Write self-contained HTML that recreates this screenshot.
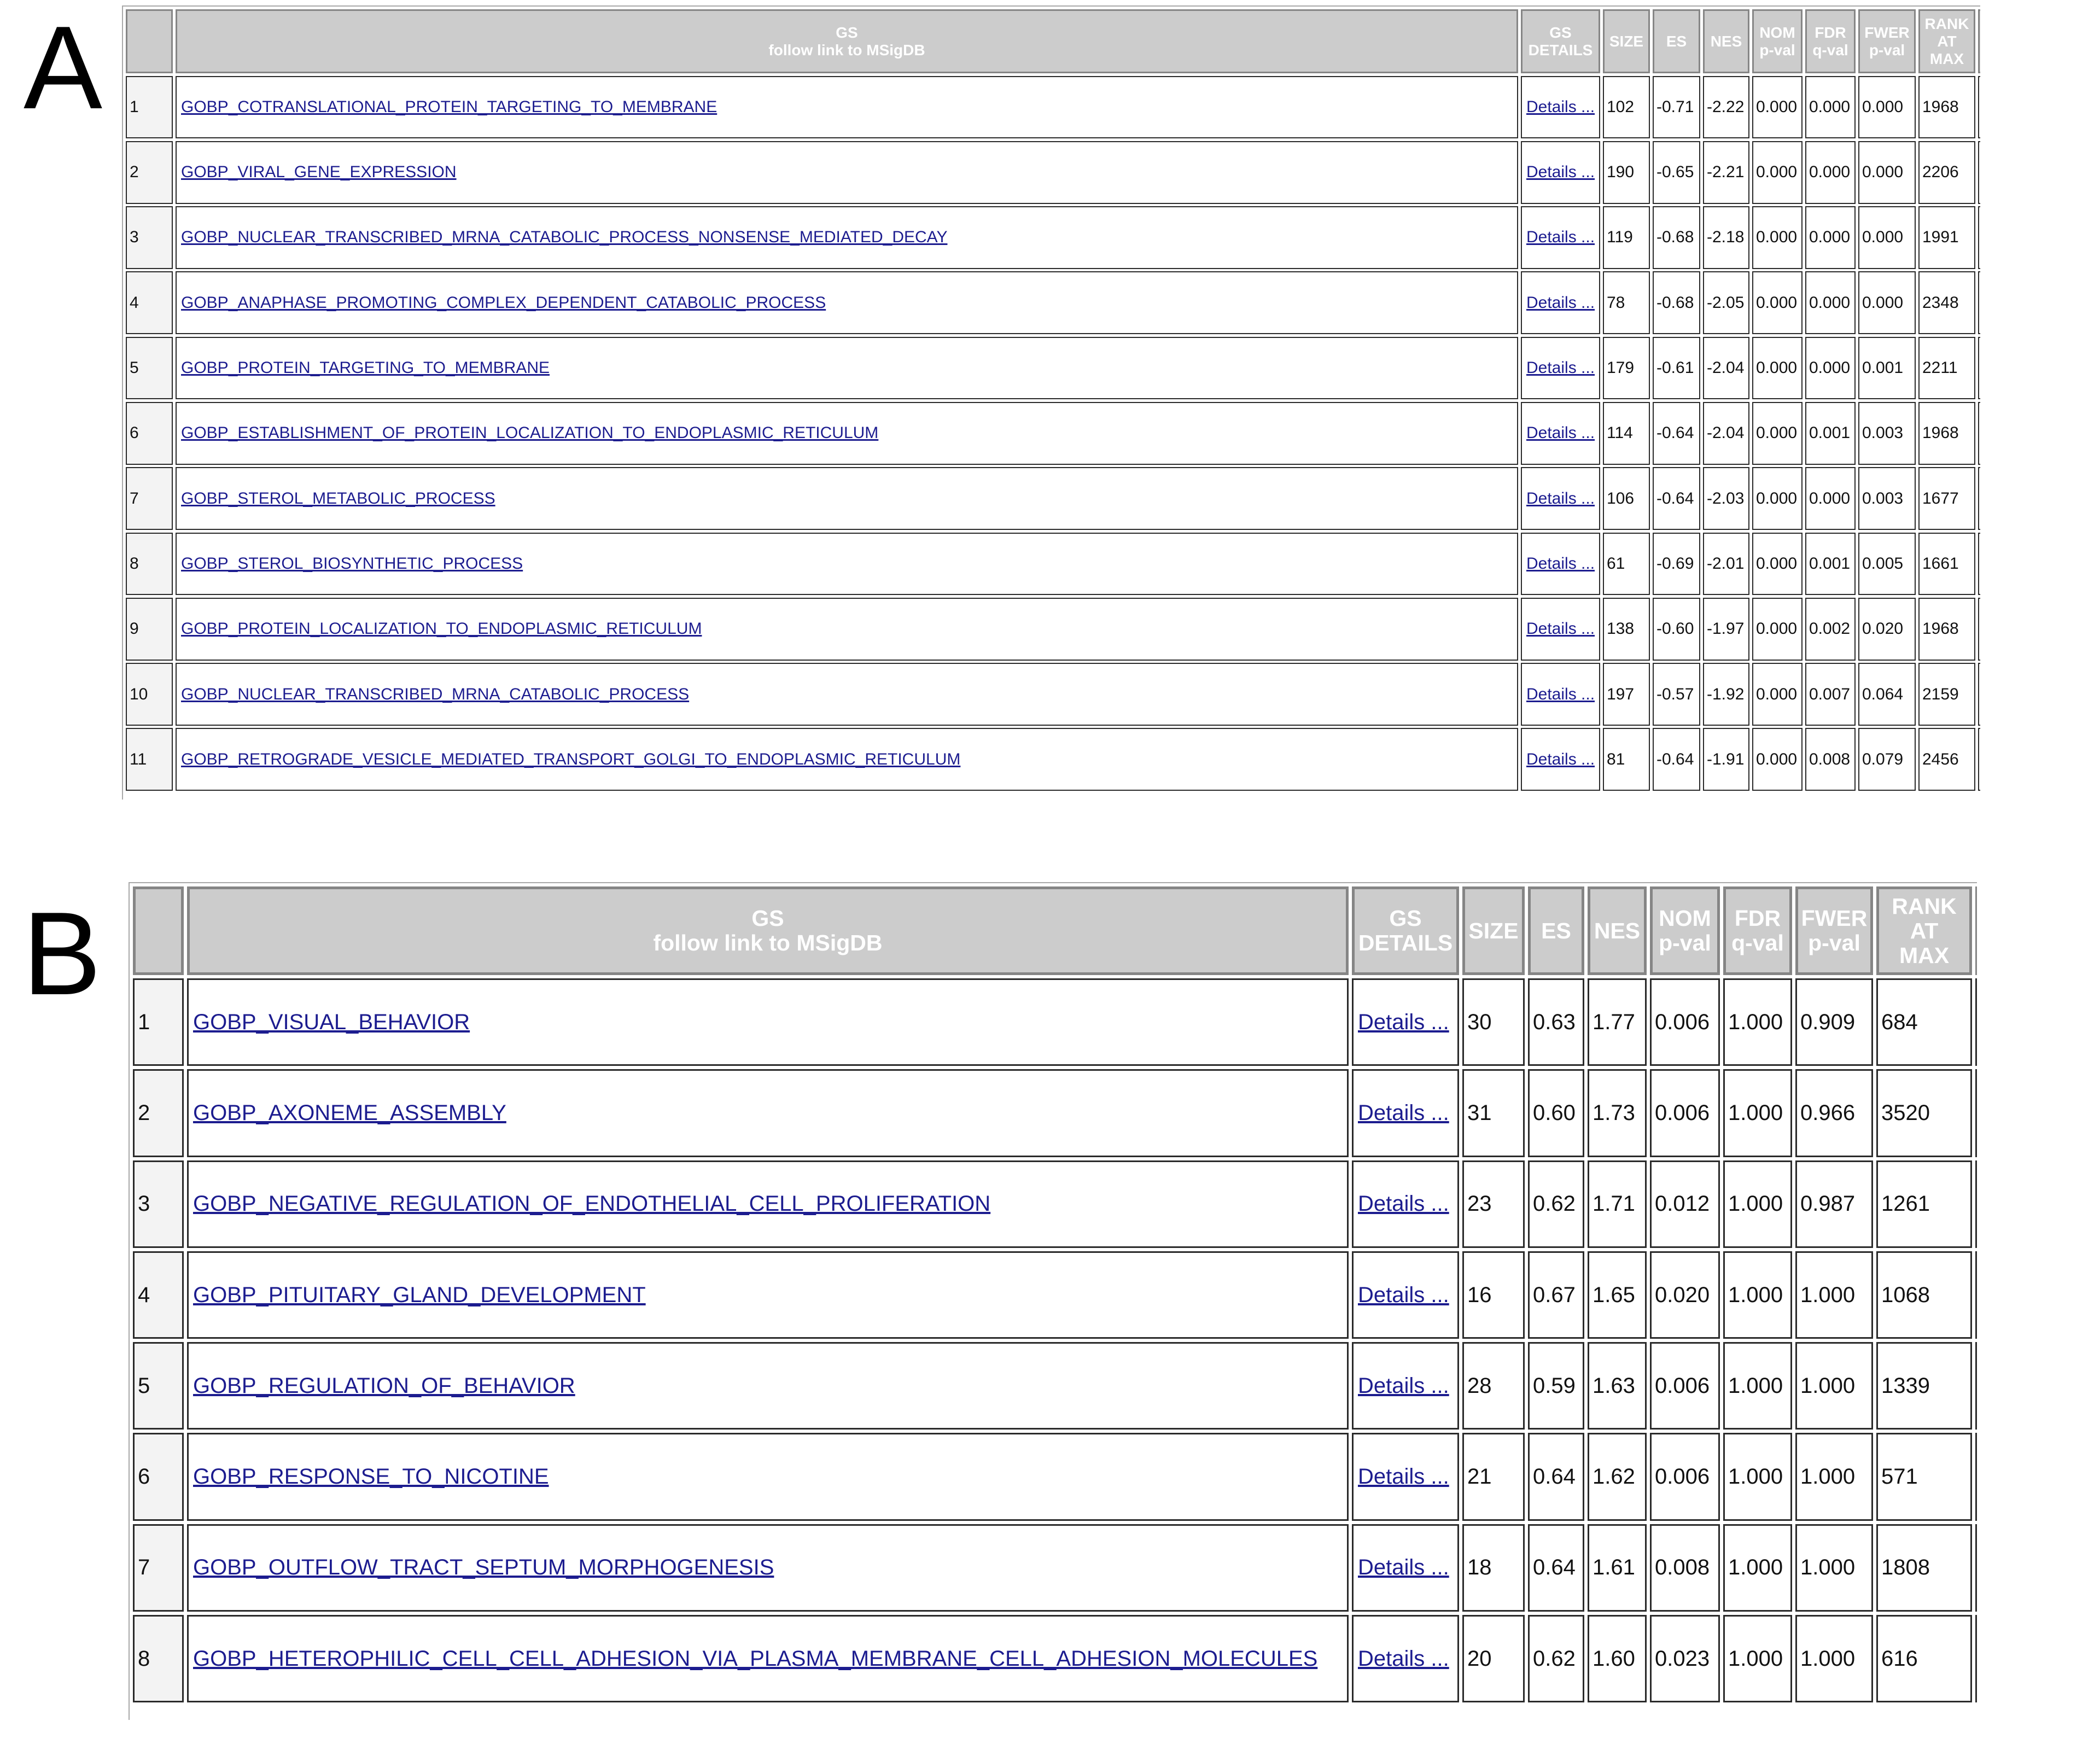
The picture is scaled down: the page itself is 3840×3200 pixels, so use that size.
<!DOCTYPE html>
<html><head><meta charset="utf-8">
<style>
html,body{margin:0;padding:0;background:#fff;width:3840px;height:3200px;overflow:hidden;font-family:"Liberation Sans",Arial,sans-serif;}
.lbl{position:absolute;font-size:216px;line-height:216px;color:#000;}
.g{position:absolute;overflow:hidden;display:grid;box-sizing:border-box;border-top:2px solid #a8a8a8;border-left:2px solid #a8a8a8;align-content:start;}
.g>div{box-sizing:border-box;display:flex;align-items:center;white-space:nowrap;overflow:hidden;}
.h{background:#ccc;color:#fff;font-weight:bold;justify-content:center;text-align:center;}
.c{background:#fff;color:#111;}
.n{background:#f3f3f3;color:#111;}
a{color:#1c1c8f;text-decoration:underline;}
#ta{left:223px;top:10px;width:3398px;height:1452px;padding:5px;column-gap:5px;row-gap:4.5px;
grid-template-columns:86px 2455px 145px 86px 87px 85px 92px 92px 105px 104px 100px;
grid-template-rows:117px repeat(11,114.8px);}
#ta .h{border:3px solid #868686;font-size:28px;line-height:32px;}
#ta .c,#ta .n{border:2px solid #2a2a2a;font-size:30px;padding-left:5px;}
#ta .l{padding-left:8px;}
#tb{left:235px;top:1613px;width:3380px;height:1532px;padding:6px;column-gap:6px;row-gap:6px;
grid-template-columns:93px 2124px 196px 114px 103px 108px 128px 126px 142px 175px 100px;
grid-template-rows:162px repeat(8,160.3px);}
#tb .h{border:5px solid #858585;font-size:41px;line-height:45px;}
#tb .c,#tb .n{border:3px solid #2a2a2a;font-size:40px;padding-left:6px;}
#tb .l{padding-left:8px;}
</style></head><body>
<div class="lbl" style="left:43px;top:15px;">A</div>
<div class="lbl" style="left:41px;top:1635px;">B</div>

<div class="g" id="ta">
<div class="h"></div><div class="h">GS<br>follow link to MSigDB</div><div class="h">GS<br>DETAILS</div><div class="h">SIZE</div><div class="h">ES</div><div class="h">NES</div><div class="h">NOM<br>p-val</div><div class="h">FDR<br>q-val</div><div class="h">FWER<br>p-val</div><div class="h">RANK<br>AT<br>MAX</div><div class="h"></div>
<div class="n">1</div><div class="c l"><a>GOBP_COTRANSLATIONAL_PROTEIN_TARGETING_TO_MEMBRANE</a></div><div class="c l"><a>Details ...</a></div><div class="c">102</div><div class="c">-0.71</div><div class="c">-2.22</div><div class="c">0.000</div><div class="c">0.000</div><div class="c">0.000</div><div class="c">1968</div><div class="c"></div>
<div class="n">2</div><div class="c l"><a>GOBP_VIRAL_GENE_EXPRESSION</a></div><div class="c l"><a>Details ...</a></div><div class="c">190</div><div class="c">-0.65</div><div class="c">-2.21</div><div class="c">0.000</div><div class="c">0.000</div><div class="c">0.000</div><div class="c">2206</div><div class="c"></div>
<div class="n">3</div><div class="c l"><a>GOBP_NUCLEAR_TRANSCRIBED_MRNA_CATABOLIC_PROCESS_NONSENSE_MEDIATED_DECAY</a></div><div class="c l"><a>Details ...</a></div><div class="c">119</div><div class="c">-0.68</div><div class="c">-2.18</div><div class="c">0.000</div><div class="c">0.000</div><div class="c">0.000</div><div class="c">1991</div><div class="c"></div>
<div class="n">4</div><div class="c l"><a>GOBP_ANAPHASE_PROMOTING_COMPLEX_DEPENDENT_CATABOLIC_PROCESS</a></div><div class="c l"><a>Details ...</a></div><div class="c">78</div><div class="c">-0.68</div><div class="c">-2.05</div><div class="c">0.000</div><div class="c">0.000</div><div class="c">0.000</div><div class="c">2348</div><div class="c"></div>
<div class="n">5</div><div class="c l"><a>GOBP_PROTEIN_TARGETING_TO_MEMBRANE</a></div><div class="c l"><a>Details ...</a></div><div class="c">179</div><div class="c">-0.61</div><div class="c">-2.04</div><div class="c">0.000</div><div class="c">0.000</div><div class="c">0.001</div><div class="c">2211</div><div class="c"></div>
<div class="n">6</div><div class="c l"><a>GOBP_ESTABLISHMENT_OF_PROTEIN_LOCALIZATION_TO_ENDOPLASMIC_RETICULUM</a></div><div class="c l"><a>Details ...</a></div><div class="c">114</div><div class="c">-0.64</div><div class="c">-2.04</div><div class="c">0.000</div><div class="c">0.001</div><div class="c">0.003</div><div class="c">1968</div><div class="c"></div>
<div class="n">7</div><div class="c l"><a>GOBP_STEROL_METABOLIC_PROCESS</a></div><div class="c l"><a>Details ...</a></div><div class="c">106</div><div class="c">-0.64</div><div class="c">-2.03</div><div class="c">0.000</div><div class="c">0.000</div><div class="c">0.003</div><div class="c">1677</div><div class="c"></div>
<div class="n">8</div><div class="c l"><a>GOBP_STEROL_BIOSYNTHETIC_PROCESS</a></div><div class="c l"><a>Details ...</a></div><div class="c">61</div><div class="c">-0.69</div><div class="c">-2.01</div><div class="c">0.000</div><div class="c">0.001</div><div class="c">0.005</div><div class="c">1661</div><div class="c"></div>
<div class="n">9</div><div class="c l"><a>GOBP_PROTEIN_LOCALIZATION_TO_ENDOPLASMIC_RETICULUM</a></div><div class="c l"><a>Details ...</a></div><div class="c">138</div><div class="c">-0.60</div><div class="c">-1.97</div><div class="c">0.000</div><div class="c">0.002</div><div class="c">0.020</div><div class="c">1968</div><div class="c"></div>
<div class="n">10</div><div class="c l"><a>GOBP_NUCLEAR_TRANSCRIBED_MRNA_CATABOLIC_PROCESS</a></div><div class="c l"><a>Details ...</a></div><div class="c">197</div><div class="c">-0.57</div><div class="c">-1.92</div><div class="c">0.000</div><div class="c">0.007</div><div class="c">0.064</div><div class="c">2159</div><div class="c"></div>
<div class="n">11</div><div class="c l"><a>GOBP_RETROGRADE_VESICLE_MEDIATED_TRANSPORT_GOLGI_TO_ENDOPLASMIC_RETICULUM</a></div><div class="c l"><a>Details ...</a></div><div class="c">81</div><div class="c">-0.64</div><div class="c">-1.91</div><div class="c">0.000</div><div class="c">0.008</div><div class="c">0.079</div><div class="c">2456</div><div class="c"></div>
</div>

<div class="g" id="tb">
<div class="h"></div><div class="h">GS<br>follow link to MSigDB</div><div class="h">GS<br>DETAILS</div><div class="h">SIZE</div><div class="h">ES</div><div class="h">NES</div><div class="h">NOM<br>p-val</div><div class="h">FDR<br>q-val</div><div class="h">FWER<br>p-val</div><div class="h">RANK<br>AT<br>MAX</div><div class="h"></div>
<div class="n">1</div><div class="c l"><a>GOBP_VISUAL_BEHAVIOR</a></div><div class="c l"><a>Details ...</a></div><div class="c">30</div><div class="c">0.63</div><div class="c">1.77</div><div class="c">0.006</div><div class="c">1.000</div><div class="c">0.909</div><div class="c">684</div><div class="c"></div>
<div class="n">2</div><div class="c l"><a>GOBP_AXONEME_ASSEMBLY</a></div><div class="c l"><a>Details ...</a></div><div class="c">31</div><div class="c">0.60</div><div class="c">1.73</div><div class="c">0.006</div><div class="c">1.000</div><div class="c">0.966</div><div class="c">3520</div><div class="c"></div>
<div class="n">3</div><div class="c l"><a>GOBP_NEGATIVE_REGULATION_OF_ENDOTHELIAL_CELL_PROLIFERATION</a></div><div class="c l"><a>Details ...</a></div><div class="c">23</div><div class="c">0.62</div><div class="c">1.71</div><div class="c">0.012</div><div class="c">1.000</div><div class="c">0.987</div><div class="c">1261</div><div class="c"></div>
<div class="n">4</div><div class="c l"><a>GOBP_PITUITARY_GLAND_DEVELOPMENT</a></div><div class="c l"><a>Details ...</a></div><div class="c">16</div><div class="c">0.67</div><div class="c">1.65</div><div class="c">0.020</div><div class="c">1.000</div><div class="c">1.000</div><div class="c">1068</div><div class="c"></div>
<div class="n">5</div><div class="c l"><a>GOBP_REGULATION_OF_BEHAVIOR</a></div><div class="c l"><a>Details ...</a></div><div class="c">28</div><div class="c">0.59</div><div class="c">1.63</div><div class="c">0.006</div><div class="c">1.000</div><div class="c">1.000</div><div class="c">1339</div><div class="c"></div>
<div class="n">6</div><div class="c l"><a>GOBP_RESPONSE_TO_NICOTINE</a></div><div class="c l"><a>Details ...</a></div><div class="c">21</div><div class="c">0.64</div><div class="c">1.62</div><div class="c">0.006</div><div class="c">1.000</div><div class="c">1.000</div><div class="c">571</div><div class="c"></div>
<div class="n">7</div><div class="c l"><a>GOBP_OUTFLOW_TRACT_SEPTUM_MORPHOGENESIS</a></div><div class="c l"><a>Details ...</a></div><div class="c">18</div><div class="c">0.64</div><div class="c">1.61</div><div class="c">0.008</div><div class="c">1.000</div><div class="c">1.000</div><div class="c">1808</div><div class="c"></div>
<div class="n">8</div><div class="c l"><a>GOBP_HETEROPHILIC_CELL_CELL_ADHESION_VIA_PLASMA_MEMBRANE_CELL_ADHESION_MOLECULES</a></div><div class="c l"><a>Details ...</a></div><div class="c">20</div><div class="c">0.62</div><div class="c">1.60</div><div class="c">0.023</div><div class="c">1.000</div><div class="c">1.000</div><div class="c">616</div><div class="c"></div>
</div>
</body></html>
